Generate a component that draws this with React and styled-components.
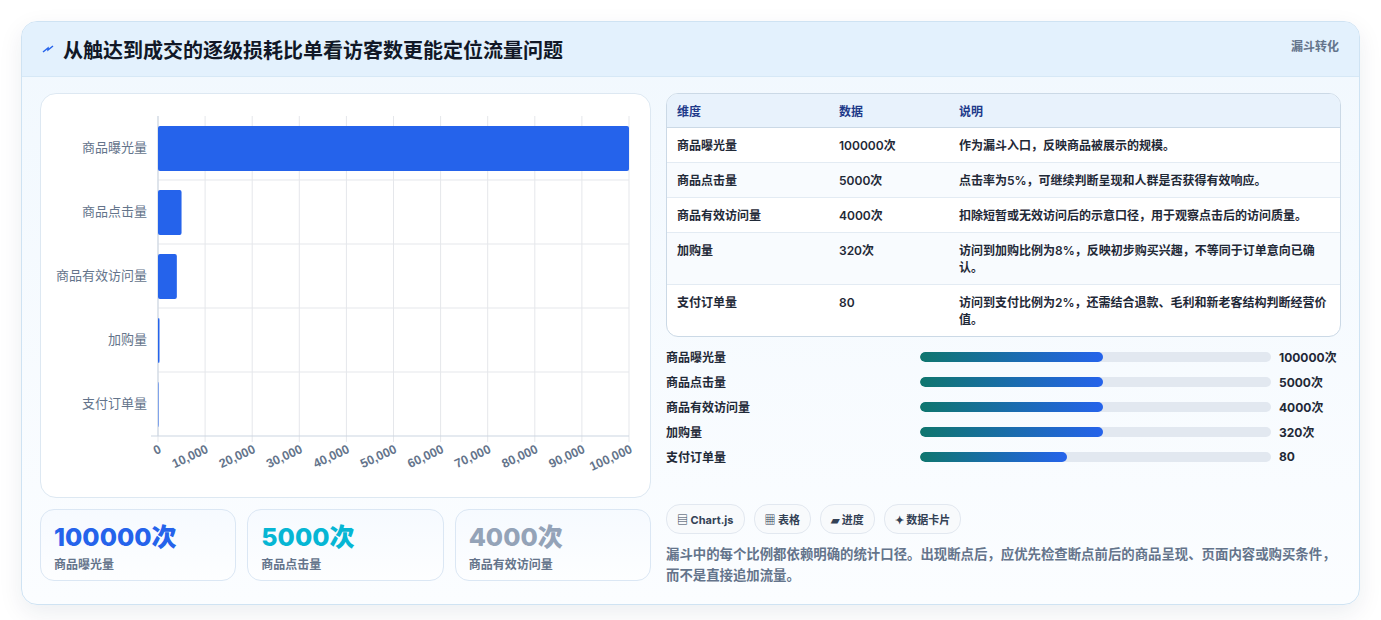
import React from 'react';
import styled, { createGlobalStyle } from 'styled-components';

const Global = createGlobalStyle`
  body { margin: 0; background: #fff; font-family: Inter, "Noto Sans CJK SC", sans-serif; }
`;

const rows = [
  { name: '商品曝光量', value: 100000, unit: '次', desc: '作为漏斗入口，反映商品被展示的规模。', pct: 52 },
  { name: '商品点击量', value: 5000, unit: '次', desc: '点击率为5%，可继续判断呈现和人群是否获得有效响应。', pct: 52 },
  { name: '商品有效访问量', value: 4000, unit: '次', desc: '扣除短暂或无效访问后的示意口径，用于观察点击后的访问质量。', pct: 52 },
  { name: '加购量', value: 320, unit: '次', desc: '访问到加购比例为8%，反映初步购买兴趣，不等同于订单意向已确认。', pct: 52 },
  { name: '支付订单量', value: 80, unit: '', desc: '访问到支付比例为2%，还需结合退款、毛利和新老客结构判断经营价值。', pct: 42 },
];

const Page = styled.div`
  padding: 21px 21px 22px 21px;
`;
const Card = styled.div`
  border: 1px solid #cfe3f3;
  border-radius: 16px;
  background: linear-gradient(180deg, #f1f8fe 0%, #fbfdff 100%);
  box-shadow: 0 8px 24px rgba(15, 40, 80, 0.08);
  overflow: hidden;
`;
const Header = styled.div`
  height: 54px;
  display: flex;
  align-items: center;
  justify-content: space-between;
  padding: 0 20px;
  background: #e3f1fd;
  border-bottom: 1px solid #d6e8f6;
`;
const Title = styled.h1`
  margin: 0;
  display: flex;
  align-items: center;
  gap: 9px;
  font-size: 20px;
  font-weight: 700;
  color: #111827;
`;
const Tag = styled.span`
  align-self: flex-start;
  margin-top: 15px;
  font-size: 12px;
  font-weight: 700;
  color: #64748b;
`;
const Body = styled.div`
  display: grid;
  grid-template-columns: 611px 1fr;
  gap: 15px;
  padding: 16px 18px 18px 18px;
`;
const Col = styled.div`
  display: flex;
  flex-direction: column;
`;
const ChartBox = styled.div`
  height: 403px;
  background: #fff;
  border: 1px solid #dde8f2;
  border-radius: 16px;
`;
const Stats = styled.div`
  display: grid;
  grid-template-columns: repeat(3, 1fr);
  gap: 11px;
  margin-top: 11px;
`;
const Stat = styled.div`
  height: 72px;
  box-sizing: border-box;
  padding: 12px 13px;
  border: 1px solid #dbe7f4;
  border-radius: 14px;
  background: linear-gradient(180deg, #f6faff, #fdfeff);
`;
const StatNum = styled.div`
  font-size: 25px;
  font-weight: 800;
  line-height: 30px;
  color: ${p => p.$c};
`;
const StatLabel = styled.div`
  font-size: 12px;
  font-weight: 600;
  color: #64748b;
  margin-top: 3px;
`;
const TableWrap = styled.div`
  border: 1px solid #cbd9e6;
  border-radius: 12px;
  overflow: hidden;
  background: #fff;
`;
const Table = styled.table`
  width: 100%;
  border-collapse: collapse;
  font-size: 12px;
  color: #1f2937;
  th {
    text-align: left;
    background: #e8f2fc;
    color: #1e3a8a;
    font-weight: 700;
    height: 33px;
    padding: 0 10px;
    border-bottom: 1px solid #cbd9e6;
  }
  td {
    padding: 9px 10px 8px;
    line-height: 17px;
    font-weight: 600;
    vertical-align: top;
    border-bottom: 1px solid #e3ebf3;
  }
  tr:nth-child(even) td { background: #f8fbfe; }
  tr:last-child td { border-bottom: none; }
`;
const Bars = styled.div`
  display: flex;
  flex-direction: column;
  gap: 9px;
  margin-top: 11px;
`;
const BarRow = styled.div`
  display: grid;
  grid-template-columns: 246px 351px 1fr;
  gap: 8px;
  align-items: center;
  font-size: 12px;
  font-weight: 700;
  color: #1f2937;
  height: 16px;
  white-space: nowrap;
`;
const Track = styled.div`
  height: 10px;
  border-radius: 5px;
  background: #e2e8f0;
  overflow: hidden;
`;
const Fill = styled.div`
  height: 100%;
  border-radius: 5px;
  background: linear-gradient(90deg, #0f766e, #2563eb);
`;
const Chips = styled.div`
  display: flex;
  gap: 9px;
  margin-top: 40px;
`;
const Chip = styled.span`
  display: inline-flex;
  align-items: center;
  gap: 4px;
  height: 28px;
  padding: 0 10px;
  border: 1px solid #e2e8f0;
  border-radius: 14px;
  background: #f8fafc;
  font-size: 11px;
  font-weight: 700;
  color: #334155;
`;
const Note = styled.p`
  margin: 10px 0 0;
  font-size: 13.4px;
  line-height: 21px;
  font-weight: 600;
  color: #64748b;
`;

function Chart() {
  const x0 = 117, x1 = 588, top = 22, band = 64;
  const w = x1 - x0;
  const ticks = Array.from({ length: 11 }, (_, i) => i);
  return (
    <svg width="609" height="401" style={{ display: 'block' }}>
      {ticks.map(i => (
        <line key={i} x1={x0 + (w * i) / 10} x2={x0 + (w * i) / 10} y1={top} y2={top + band * 5 + 6} stroke="#e5e7eb" />
      ))}
      {[1, 2, 3, 4].map(i => (
        <line key={i} x1={x0} x2={x1} y1={top + band * i} y2={top + band * i} stroke="#e5e7eb" />
      ))}
      <line x1={x0} x2={x0} y1={top} y2={top + band * 5} stroke="#cbd5e1" />
      <line x1={x0 - 7} x2={x1} y1={top + band * 5} y2={top + band * 5} stroke="#cbd5e1" />
      {rows.map((r, i) => (
        <g key={r.name}>
          <rect x={x0} y={top + band * i + 10} width={Math.max((w * r.value) / 100000, 0.5)} height={45} rx="2" fill="#2563eb" />
          <text x={x0 - 11} y={top + band * i + 36} textAnchor="end" fontSize="13" fill="#64748b" fontFamily="Inter, 'Noto Sans CJK SC', sans-serif">{r.name}</text>
        </g>
      ))}
      {ticks.map(i => (
        <text key={i} transform={`translate(${x0 + (w * i) / 10 + 4}, ${top + band * 5 + 16}) rotate(-25)`} textAnchor="end" fontSize="12.5" fontWeight="700" fill="#64748b" fontFamily="'Liberation Sans', sans-serif">
          {i === 0 ? '0' : (i * 10000).toLocaleString('en-US')}
        </text>
      ))}
    </svg>
  );
}

export default function App() {
  return (
    <Page>
      <Global />
      <Card>
        <Header>
          <Title>
            <svg width="12" height="10" viewBox="0 0 12 10"><path d="M1 8 L6 4 L6 6 L11 2" stroke="#2563eb" strokeWidth="1.5" fill="none" /></svg>
            从触达到成交的逐级损耗比单看访客数更能定位流量问题
          </Title>
          <Tag>漏斗转化</Tag>
        </Header>
        <Body>
          <Col>
            <ChartBox><Chart /></ChartBox>
            <Stats>
              <Stat><StatNum $c="#2563eb">100000次</StatNum><StatLabel>商品曝光量</StatLabel></Stat>
              <Stat><StatNum $c="#06b6d4">5000次</StatNum><StatLabel>商品点击量</StatLabel></Stat>
              <Stat><StatNum $c="#94a3b8">4000次</StatNum><StatLabel>商品有效访问量</StatLabel></Stat>
            </Stats>
          </Col>
          <Col>
            <TableWrap>
              <Table>
                <colgroup><col style={{ width: 162 }} /><col style={{ width: 120 }} /><col /></colgroup>
                <thead><tr><th>维度</th><th>数据</th><th>说明</th></tr></thead>
                <tbody>
                  {rows.map(r => (
                    <tr key={r.name}><td>{r.name}</td><td>{r.value}{r.unit}</td><td>{r.desc}</td></tr>
                  ))}
                </tbody>
              </Table>
            </TableWrap>
            <Bars>
              {rows.map(r => (
                <BarRow key={r.name}>
                  <span>{r.name}</span>
                  <Track><Fill style={{ width: `${r.pct}%` }} /></Track>
                  <span>{r.value}{r.unit}</span>
                </BarRow>
              ))}
            </Bars>
            <Chips>
              <Chip>▤ Chart.js</Chip>
              <Chip>▦ 表格</Chip>
              <Chip>▰ 进度</Chip>
              <Chip>✦ 数据卡片</Chip>
            </Chips>
            <Note>漏斗中的每个比例都依赖明确的统计口径。出现断点后，应优先检查断点前后的商品呈现、页面内容或购买条件，而不是直接追加流量。</Note>
          </Col>
        </Body>
      </Card>
    </Page>
  );
}
